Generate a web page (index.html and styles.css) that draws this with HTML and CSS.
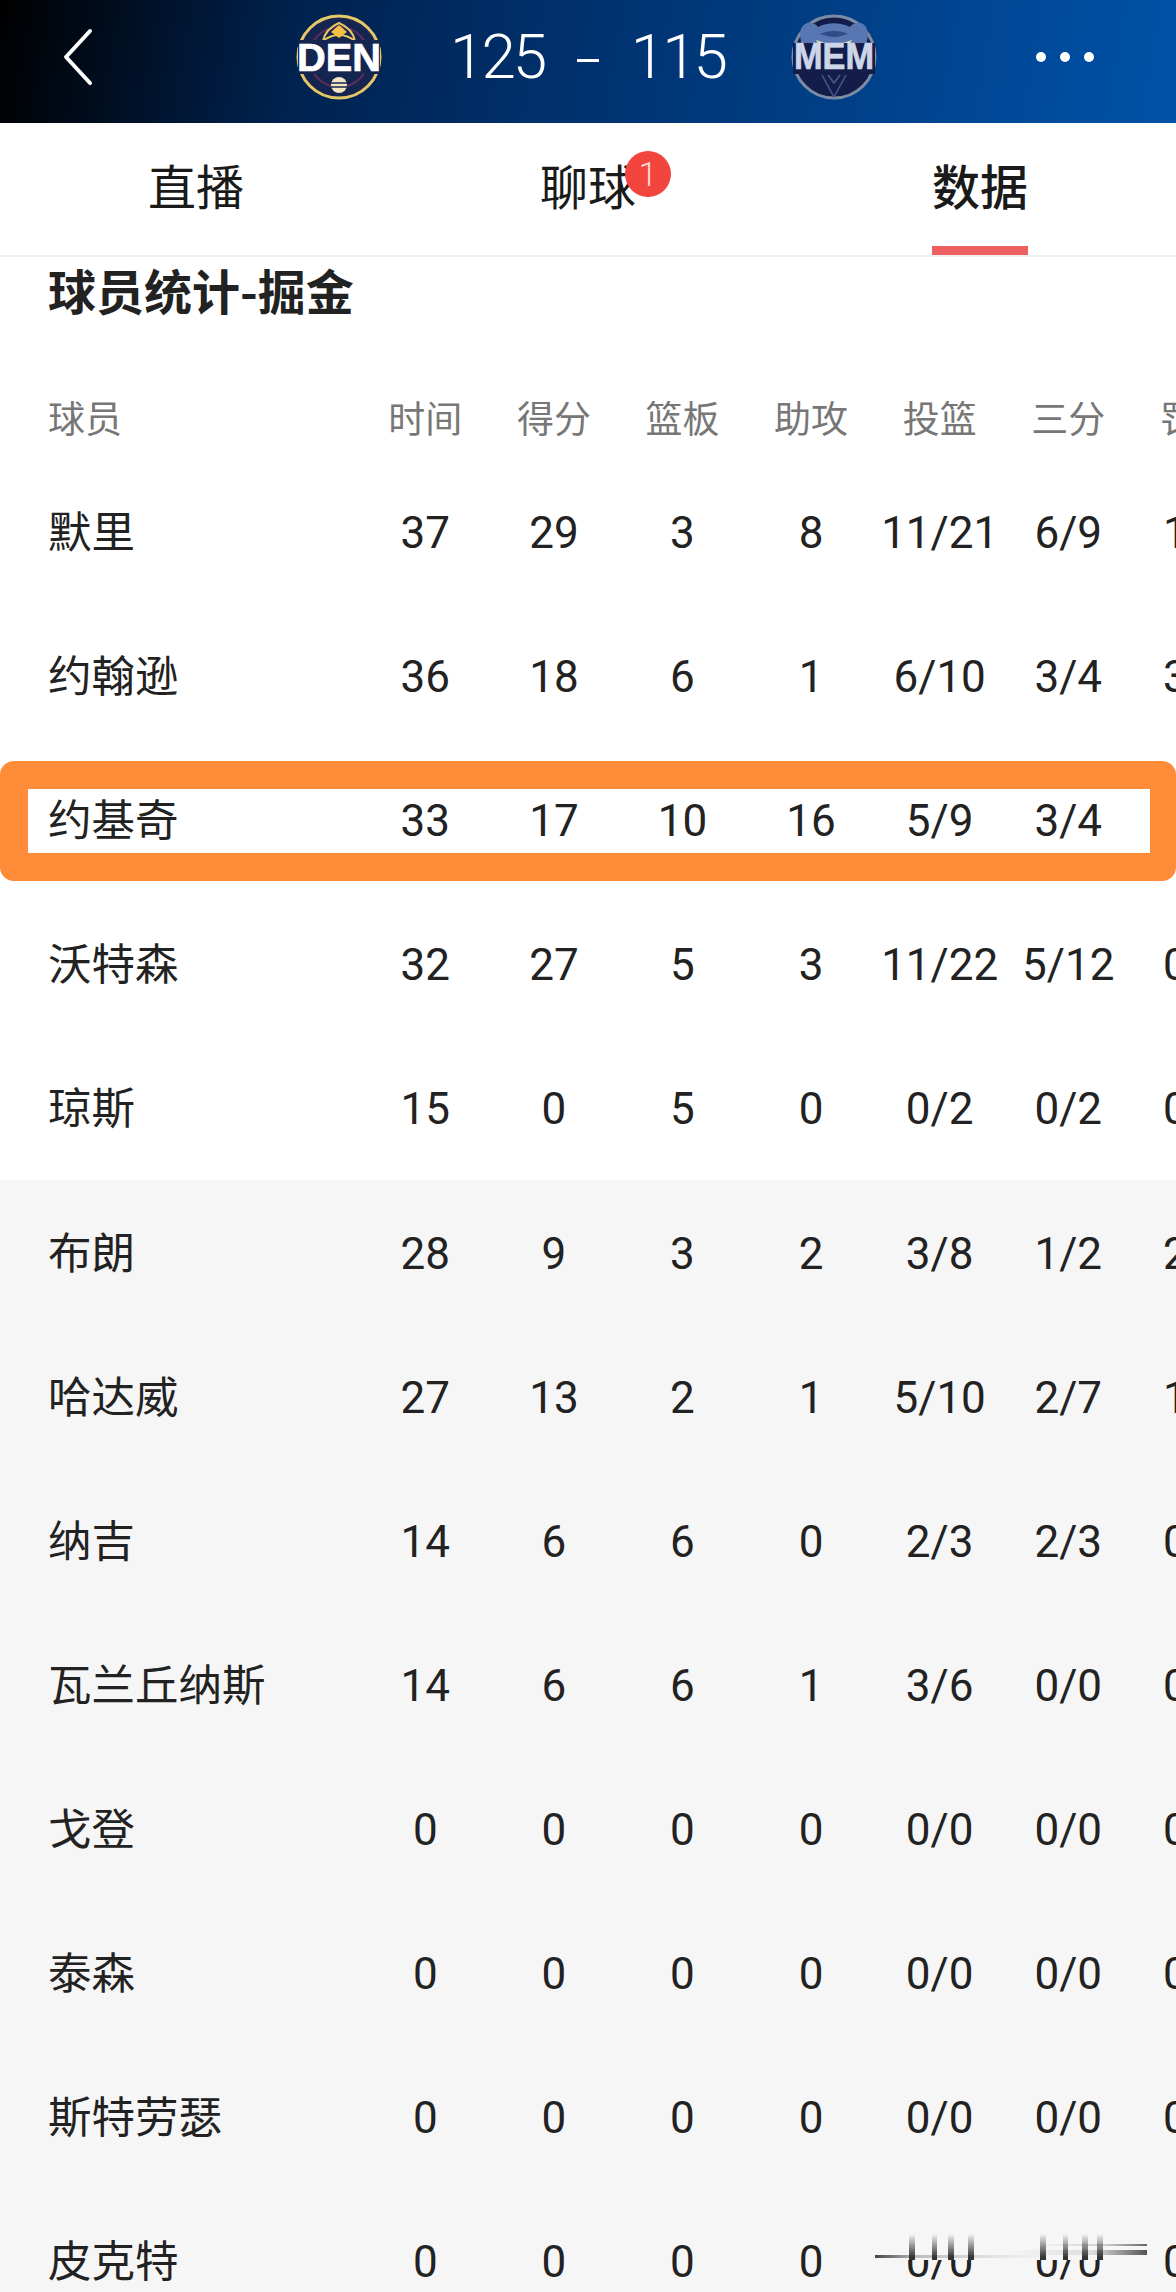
FILE: index.html
```html
<!DOCTYPE html>
<html lang="zh">
<head>
<meta charset="utf-8">
<title>球员统计</title>
<link rel="stylesheet" href="styles.css">
</head>
<body>
<div class="page">
  <header class="topbar">
    <svg class="back" viewBox="0 0 36 60"><path d="M30 4 6 30l24 26" fill="none" stroke="#fff" stroke-width="4" stroke-linecap="round" stroke-linejoin="round"/></svg>
    <svg class="logo logo-den" viewBox="0 0 88 88">
      <circle cx="44" cy="44" r="41" fill="#14264f" stroke="#e6c766" stroke-width="3"/>
      <circle cx="44" cy="44" r="30" fill="none" stroke="#5b2d5e" stroke-width="2"/>
      <path d="M28 28c2-10 9-15 16-18 7 3 14 8 16 18-5-4-10-6-16-6s-11 2-16 6z" fill="none" stroke="#e6c766" stroke-width="2"/>
      <path d="M44 12l8 7-8 6-8-6z" fill="#f4c145"/>
      <rect x="3" y="27" width="82" height="34" fill="#14264f"/>
      <circle cx="44" cy="72" r="8" fill="#f1e6bf"/>
      <path d="M36 70h16M36 74h16" stroke="#14264f" stroke-width="1.5"/>
      <text class="logo-text" x="44" y="58" text-anchor="middle" textLength="84" lengthAdjust="spacingAndGlyphs" fill="#fff" stroke="#fff">DEN</text>
    </svg>
    <div class="score">
      <span>125</span>
      <span class="dash"></span>
      <span>115</span>
    </div>
    <svg class="logo logo-mem" viewBox="0 0 88 88">
      <circle cx="44" cy="44" r="41" fill="#141d4a" stroke="#7d8ca5" stroke-width="3"/>
      <path d="M12 32C9 22 9 13 17 10c5-1 9 1 11 4 10-5 22-5 32 0 2-3 6-5 11-4 8 3 8 12 5 22z" fill="#5877b2"/>
      <path d="M30 21c8-4 20-4 28 0-5 1-10 3-14 3s-9-2-14-3zM37 30h14l-7 5z" fill="#2f4a85"/>
      <path d="M26 27l9 3-6 2zM62 27l-9 3 6 2z" fill="#dfe3b5"/>
      <rect x="3" y="30" width="82" height="31" fill="#141d4a"/>
      <text class="logo-text logo-text-mem" x="44" y="56" text-anchor="middle" textLength="80" lengthAdjust="spacingAndGlyphs" fill="#cdd6e8" stroke="#cdd6e8">MEM</text>
      <path d="M32 62l12 22 12-22M38 62l6 8 6-8" fill="none" stroke="#4a5a8c" stroke-width="1.5"/>
    </svg>
    <div class="dots"><i></i><i></i><i></i></div>
  </header>

  <nav class="tabs">
    <div class="tab">直播</div>
    <div class="tab"><span class="tab-label">聊球<b class="badge">1</b></span></div>
    <div class="tab tab-active"><span class="tab-label">数据</span></div>
  </nav>

  <h1 class="title">球员统计-掘金</h1>

  <section class="table">
    <div class="row head"><div>球员</div><div>时间</div><div>得分</div><div>篮板</div><div>助攻</div><div>投篮</div><div>三分</div><div>罚球</div></div>
    <div class="row"><div>默里</div><div>37</div><div>29</div><div>3</div><div>8</div><div>11/21</div><div>6/9</div><div>1/1</div></div>
    <div class="row"><div>约翰逊</div><div>36</div><div>18</div><div>6</div><div>1</div><div>6/10</div><div>3/4</div><div>3/4</div></div>
    <div class="row row-marked"><div>约基奇</div><div>33</div><div>17</div><div>10</div><div>16</div><div>5/9</div><div>3/4</div><div>4/4</div><span class="mark"></span></div>
    <div class="row"><div>沃特森</div><div>32</div><div>27</div><div>5</div><div>3</div><div>11/22</div><div>5/12</div><div>0/0</div></div>
    <div class="row"><div>琼斯</div><div>15</div><div>0</div><div>5</div><div>0</div><div>0/2</div><div>0/2</div><div>0/0</div></div>
    <div class="bench">
      <div class="row"><div>布朗</div><div>28</div><div>9</div><div>3</div><div>2</div><div>3/8</div><div>1/2</div><div>2/2</div></div>
      <div class="row"><div>哈达威</div><div>27</div><div>13</div><div>2</div><div>1</div><div>5/10</div><div>2/7</div><div>1/1</div></div>
      <div class="row"><div>纳吉</div><div>14</div><div>6</div><div>6</div><div>0</div><div>2/3</div><div>2/3</div><div>0/0</div></div>
      <div class="row"><div>瓦兰丘纳斯</div><div>14</div><div>6</div><div>6</div><div>1</div><div>3/6</div><div>0/0</div><div>0/0</div></div>
      <div class="row"><div>戈登</div><div>0</div><div>0</div><div>0</div><div>0</div><div>0/0</div><div>0/0</div><div>0/0</div></div>
      <div class="row"><div>泰森</div><div>0</div><div>0</div><div>0</div><div>0</div><div>0/0</div><div>0/0</div><div>0/0</div></div>
      <div class="row"><div>斯特劳瑟</div><div>0</div><div>0</div><div>0</div><div>0</div><div>0/0</div><div>0/0</div><div>0/0</div></div>
      <div class="row row-last"><div>皮克特</div><div>0</div><div>0</div><div>0</div><div>0</div><div>0/0</div><div>0/0</div><div>0/0</div><span class="smear"></span></div>
    </div>
  </section>
</div>
</body>
</html>
```
FILE: styles.css
```css
html, body {
  margin: 0;
  padding: 0;
}
body {
  width: 1176px;
  height: 2292px;
  overflow: hidden;
  background: #fff;
  font-family: Roboto, "Noto Sans CJK SC", sans-serif;
  color: #222;
}
.page {
  width: 1176px;
  height: 2292px;
  overflow: hidden;
}
.topbar {
  height: 113px;
  padding-bottom: 10px;
  display: flex;
  align-items: center;
  background: linear-gradient(100deg, #000 0%, #00224f 25%, #003575 55%, #0052a8 100%);
  color: #fff;
}
.back {
  width: 36px;
  height: 60px;
  margin-left: 60px;
  flex: none;
}
.logo {
  width: 88px;
  height: 88px;
  flex: none;
}
.logo-den {
  margin-left: 199px;
}
.logo-text {
  font-family: "Liberation Sans", sans-serif;
  font-weight: 700;
  font-size: 38px;
  stroke-width: 0.7px;
}
.logo-text-mem {
  font-size: 36px;
}
.score {
  display: flex;
  align-items: center;
  margin-left: 67px;
  width: 275px;
  justify-content: space-between;
  font-size: 62px;
  font-weight: 300;
  letter-spacing: -3px;
  line-height: 1;
  flex: none;
}
.dash {
  width: 22px;
  height: 3px;
  background: #fff;
  margin-top: 8px;
}
.logo-mem {
  margin-left: 65px;
}
.dots {
  display: flex;
  gap: 14px;
  margin-left: 158px;
}
.dots i {
  width: 10px;
  height: 10px;
  border-radius: 50%;
  background: #fff;
}
.tabs {
  height: 132px;
  display: grid;
  grid-template-columns: repeat(3, 1fr);
  border-bottom: 2px solid #f0f0f0;
}
.tab {
  position: relative;
  display: flex;
  justify-content: center;
  align-items: center;
  padding-bottom: 10px;
  font-family: "Noto Sans CJK SC", sans-serif;
  font-size: 48px;
  color: #1a1a1a;
}
.tab-label {
  position: relative;
}
.badge {
  position: absolute;
  left: 85px;
  top: 2px;
  width: 46px;
  height: 46px;
  border-radius: 50%;
  background: #f1453d;
  color: #ffd9d6;
  font-family: Roboto, sans-serif;
  font-size: 34px;
  font-weight: 300;
  line-height: 46px;
  text-align: center;
}
.tab-active {
  font-weight: 500;
}
.tab-active::after {
  content: "";
  position: absolute;
  left: 148px;
  bottom: 0;
  width: 96px;
  height: 9px;
  background: #ee5f60;
}
.title {
  margin: 0;
  padding: 0 0 55px 48px;
  height: 64px;
  line-height: 64px;
  font-family: "Noto Sans CJK SC", sans-serif;
  font-size: 48px;
  font-weight: 700;
  color: #222;
}
.row {
  position: relative;
  display: grid;
  grid-template-columns: 361px repeat(7, 128.6px);
  grid-auto-rows: 144px;
  align-items: center;
  font-size: 44px;
  font-weight: 400;
  text-align: center;
  white-space: nowrap;
  width: 1261px;
}
.row > div {
  padding-top: 2px;
}
.row > div:first-child {
  text-align: left;
  padding-top: 0;
  padding-left: 48px;
  padding-bottom: 5px;
  font-family: "Noto Sans CJK SC", sans-serif;
  font-size: 43.5px;
}
.head {
  grid-auto-rows: 84px;
  font-family: "Noto Sans CJK SC", sans-serif;
  font-size: 37px;
  color: #777;
}
.row.head > div {
  padding-top: 0;
  padding-bottom: 3px;
}
.row.head > div:first-child {
  font-size: 37px;
  padding-bottom: 3px;
}
.bench {
  padding-top: 1px;
  background: #f6f6f6;
}
.mark {
  position: absolute;
  left: 0;
  top: 13px;
  width: 1176px;
  height: 120px;
  box-sizing: border-box;
  border-style: solid;
  border-color: #ff8c38;
  border-width: 28px 26px 28px 28px;
  border-radius: 14px;
}
.smear {
  position: absolute;
  left: 875px;
  top: 45px;
  width: 272px;
  height: 26px;
  background-color: #f6f6f6;
  background-repeat: no-repeat;
  background-image:
    linear-gradient(#e6e6e600, #333 90%),
    linear-gradient(#e6e6e600, #333 90%),
    linear-gradient(#e6e6e600, #333 90%),
    linear-gradient(#e6e6e600, #333 90%),
    linear-gradient(#e6e6e600, #333 90%),
    linear-gradient(#e6e6e600, #333 90%),
    linear-gradient(#e6e6e600, #333 90%),
    linear-gradient(#e6e6e600, #333 90%),
    linear-gradient(90deg, #444, #bbb 15%, #e4e4e4 45%, #f6f6f6 65%),
    linear-gradient(90deg, #f6f6f6 50%, #ddd 80%, #555 100%),
    linear-gradient(90deg, #f6f6f6 60%, #ccc 85%, #666 100%);
  background-size:
    6px 100%, 5px 100%, 6px 100%, 6px 100%,
    6px 100%, 5px 100%, 6px 100%, 6px 100%,
    100% 3px, 100% 6px, 100% 2px;
  background-position:
    34px 0, 57px 0, 73px 0, 93px 0,
    165px 0, 188px 0, 207px 0, 222px 0,
    0 21px, 0 16px, 0 10px;
}
```
